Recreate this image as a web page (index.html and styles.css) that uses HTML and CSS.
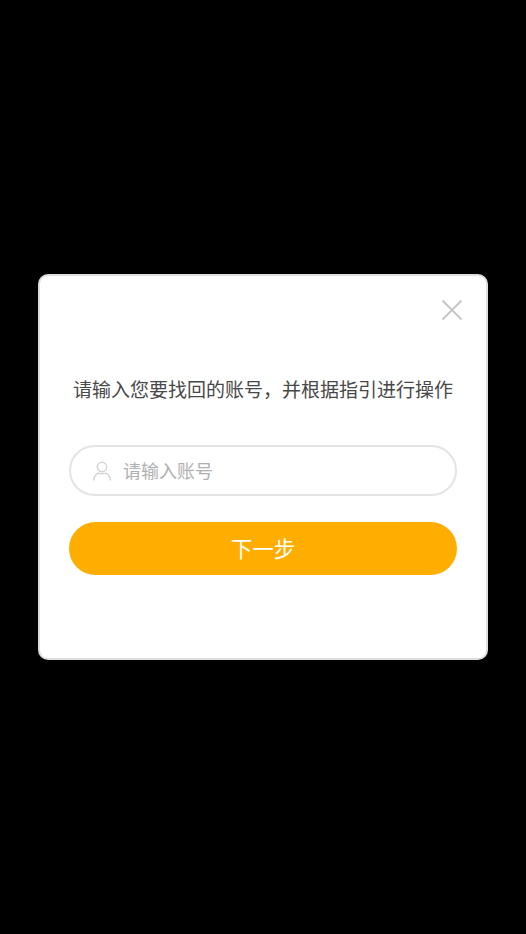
FILE: index.html
```html
<!DOCTYPE html>
<html lang="zh-CN">
<head>
    <meta charset="UTF-8">
    <meta name="viewport" content="width=device-width, initial-scale=1.0">
    <title>找回账号</title>
    <link rel="stylesheet" href="styles.css">
</head>
<body>
    <div class="dialog">
        <div class="dialog-top">
            <button class="close" aria-label="关闭">
                <svg width="22" height="22" viewBox="0 0 22 22"><path d="M1.5 1.5 L20.5 20.5 M20.5 1.5 L1.5 20.5" stroke="#c6c6c6" stroke-width="2" fill="none"/></svg>
            </button>
        </div>
        <p class="tip">请输入您要找回的账号，并根据指引进行操作</p>
        <div class="field">
            <svg class="user-icon" width="20" height="20" viewBox="0 0 20 20"><circle cx="10" cy="6" r="4.7" stroke="#d2d2d2" stroke-width="1.4" fill="none"/><path d="M1.7 19.5 C1.7 15.5 3.8 13 7 11.8 M18.3 19.5 C18.3 15.5 16.2 13 13 11.8 M5.5 12.6 H14.5" stroke="#d2d2d2" stroke-width="1.4" fill="none"/></svg>
            <input type="text" placeholder="请输入账号">
        </div>
        <button class="next">下一步</button>
    </div>
</body>
</html>
```

FILE: styles.css
```css
html, body { height: 100%; }
body { margin: 0; background: #000; display: flex; align-items: center; justify-content: center; font-family: "Noto Sans CJK SC", "Noto Sans", sans-serif; }
.dialog { box-sizing: border-box; width: 450px; height: 386px; background: #fff; border: 2px solid #dedede; border-radius: 10px; padding: 0 29px; }
.dialog-top { display: flex; justify-content: flex-end; padding-top: 23px; margin-right: -6px; height: 64px; box-sizing: border-box; }
.close { width: 22px; height: 22px; padding: 0; border: none; background: none; cursor: pointer; }
.close svg { display: block; }
.tip { margin: 35px 0 42px; height: 28px; line-height: 28px; font-size: 19px; color: #484848; text-align: center; white-space: nowrap; }
.field { box-sizing: border-box; height: 51px; border: 2px solid #e4e4e4; border-radius: 26px; display: flex; align-items: center; padding-left: 21px; gap: 11px; }
.field input { flex: 1; min-width: 0; border: none; outline: none; padding: 0 0 2px; font: inherit; font-size: 18px; color: #444; background: transparent; }
.field input::placeholder { color: #b0b0b0; opacity: 1; }
.next { display: block; width: 100%; height: 53px; margin-top: 26px; padding: 0 0 2px; border: none; border-radius: 27px; background: #ffae00; color: #fff; font: inherit; font-size: 21.5px; cursor: pointer; }
```
